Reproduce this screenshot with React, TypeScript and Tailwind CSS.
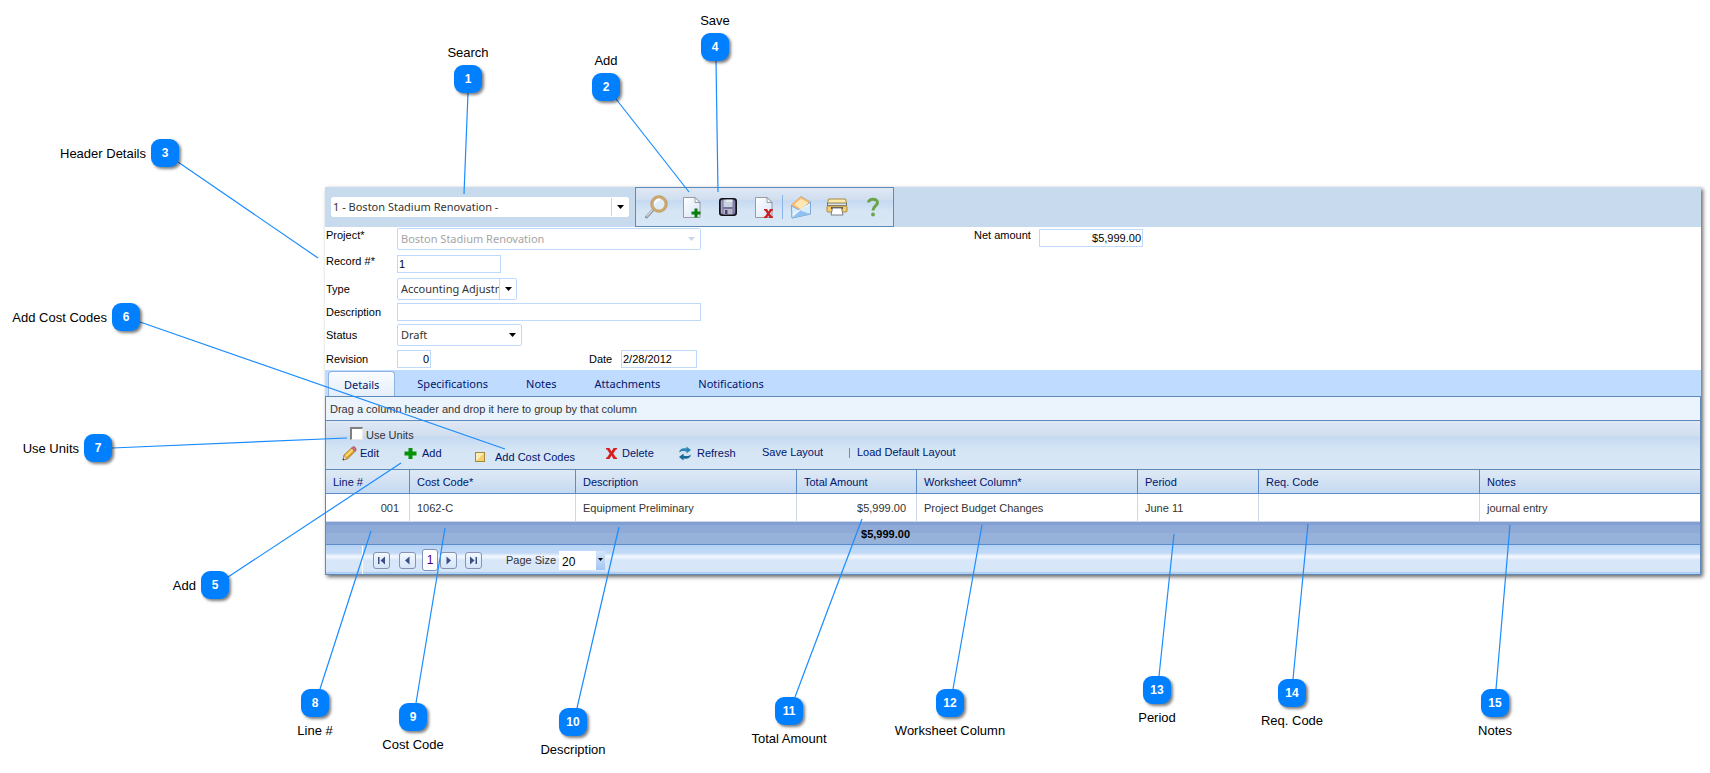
import { ReactNode } from 'react'

type Pin = {
  n: number
  label: string
  side: 'top' | 'left' | 'bottom'
  x: number
  y: number
  from: [number, number]
  to: [number, number]
}

// x / y are the centre of the numbered badge
const pins: Pin[] = [
  { n: 1, label: 'Search', side: 'top', x: 468, y: 79, from: [468, 93], to: [464, 194] },
  { n: 2, label: 'Add', side: 'top', x: 606, y: 87, from: [616, 99], to: [689, 192] },
  { n: 3, label: 'Header Details', side: 'left', x: 165, y: 153, from: [178, 162], to: [318, 258] },
  { n: 4, label: 'Save', side: 'top', x: 715, y: 47, from: [716, 61], to: [718, 192] },
  { n: 5, label: 'Add', side: 'left', x: 215, y: 585, from: [228, 577], to: [401, 463] },
  { n: 6, label: 'Add Cost Codes', side: 'left', x: 126, y: 317, from: [140, 322], to: [505, 449] },
  { n: 7, label: 'Use Units', side: 'left', x: 98, y: 448, from: [112, 448], to: [347, 438] },
  { n: 8, label: 'Line #', side: 'bottom', x: 315, y: 703, from: [320, 689], to: [371, 531] },
  { n: 9, label: 'Cost Code', side: 'bottom', x: 413, y: 717, from: [416, 703], to: [445, 528] },
  { n: 10, label: 'Description', side: 'bottom', x: 573, y: 722, from: [577, 708], to: [619, 527] },
  { n: 11, label: 'Total Amount', side: 'bottom', x: 789, y: 711, from: [795, 697], to: [862, 519] },
  { n: 12, label: 'Worksheet Column', side: 'bottom', x: 950, y: 703, from: [953, 689], to: [982, 525] },
  { n: 13, label: 'Period', side: 'bottom', x: 1157, y: 690, from: [1159, 676], to: [1174, 534] },
  { n: 14, label: 'Req. Code', side: 'bottom', x: 1292, y: 693, from: [1293, 679], to: [1308, 524] },
  { n: 15, label: 'Notes', side: 'bottom', x: 1495, y: 703, from: [1496, 689], to: [1510, 525] },
]

const labelSide = {
  top: 'bottom-[32px] left-1/2 -translate-x-1/2',
  left: 'right-[33px] top-[7px]',
  bottom: 'top-[34px] left-1/2 -translate-x-1/2',
}

const columns = [
  { title: 'Line #', width: 84, value: '001', right: true },
  { title: 'Cost Code*', width: 166, value: '1062-C' },
  { title: 'Description', width: 221, value: 'Equipment Preliminary' },
  { title: 'Total Amount', width: 120, value: '$5,999.00', right: true, total: '$5,999.00' },
  { title: 'Worksheet Column*', width: 221, value: 'Project Budget Changes' },
  { title: 'Period', width: 121, value: 'June 11' },
  { title: 'Req. Code', width: 221, value: '' },
  { title: 'Notes', width: 220, value: 'journal entry' },
]

const barGradient = 'bg-[linear-gradient(#dfe8f5_0%,#d0deef_31%,#c5d9f1_33%,#d5e5f4_60%,#d7e7f5_100%)]'

function Caret({ className = 'text-black' }: { className?: string }) {
  return (
    <svg width="7" height="4" viewBox="0 0 7 4" className={className} aria-hidden="true">
      <path d="M0 0h7L3.5 4z" fill="currentColor" />
    </svg>
  )
}

function Combo({
  id,
  value,
  className,
  selectClass = 'pl-[3px]',
  divider,
  disabled,
  label,
}: {
  id: string
  value: string
  className: string
  selectClass?: string
  divider?: boolean
  disabled?: boolean
  label?: string
}) {
  return (
    <div className={`relative rounded-[2px] border bg-white ${className}`}>
      <select
        id={id}
        aria-label={label}
        disabled={disabled}
        className={`block h-full w-full appearance-none bg-transparent pt-px font-['Noto_Sans',sans-serif] text-[11px] opacity-100 outline-none ${selectClass} ${disabled ? 'text-[#a5a5a5]' : 'text-[#333]'}`}
      >
        <option>{value}</option>
      </select>
      <span
        className={`pointer-events-none absolute inset-y-0 right-0 flex w-[17px] items-center justify-center rounded-[2px] bg-white ${divider ? 'rounded-l-none border-l border-[#bfd9fb]' : ''}`}
      >
        <Caret className={disabled ? 'text-[#c9d6ea]' : 'text-black'} />
      </span>
    </div>
  )
}

function TextBox({ id, value = '', className }: { id: string; value?: string; className: string }) {
  return (
    <input
      id={id}
      type="text"
      defaultValue={value}
      className={`h-[18px] rounded-none border border-[#bfd9fb] bg-white px-px text-[11px] text-black outline-none ${className}`}
    />
  )
}

function Row({ id, label, className, labelClass = '', children }: {
  id: string
  label: string
  className: string
  labelClass?: string
  children: ReactNode
}) {
  return (
    <div className={`flex items-center ${className}`}>
      <label htmlFor={id} className={`w-[71px] shrink-0 leading-4 ${labelClass}`}>
        {label}
      </label>
      {children}
    </div>
  )
}

function SearchIcon() {
  return (
    <svg width="24" height="24" viewBox="0 0 24 24">
      <path d="M2.500 22L9 15" stroke="#8f959c" strokeWidth="3" strokeLinecap="round" />
      <path d="M2.500 21.500L9 14.500" stroke="#d5d9dd" strokeWidth="1.200" />
      <circle cx="15" cy="9" r="7" fill="#dfedfa" stroke="#cba970" strokeWidth="3" />
      <circle cx="15" cy="9" r="8.300" fill="none" stroke="#b58e54" strokeWidth=".5" />
      <path d="M11 8.500a4.500 4.500 0 0 1 5-4" stroke="#fff" strokeWidth="2" fill="none" />
    </svg>
  )
}

function PageIcon({ children }: { children: ReactNode }) {
  return (
    <svg width="20" height="24" viewBox="0 0 20 24">
      <defs>
        <linearGradient id="page" x1="0" y1="0" x2="1" y2="1">
          <stop offset="0" stopColor="#fff" />
          <stop offset="1" stopColor="#d5e4f8" />
        </linearGradient>
      </defs>
      <path d="M1.500 2.500h11.500l5 5v15h-16.500z" fill="url(#page)" stroke="#9a9a9f" />
      <path d="M13 2.500v5h5z" fill="#f4f8fd" stroke="#85858c" strokeWidth=".8" />
      {children}
    </svg>
  )
}

function SaveIcon() {
  return (
    <svg width="18" height="18" viewBox="0 0 18 18">
      <rect x=".8" y=".8" width="16.400" height="16.400" rx="2.500" fill="#77749c" stroke="#101016" strokeWidth="1.600" />
      <path d="M2 2.500h1.500v13h-1.500z" fill="#a3a3c4" />
      <path d="M4.500 1.700h9v7.300h-9z" fill="#c9d3df" />
      <path d="M7 1.700h6.500v2.300h-6.500z" fill="#e4eaf0" />
      <path d="M4.500 11h9v5.300h-9z" fill="#b6b6c8" />
      <path d="M6 12h2.500v4h-2.500z" fill="#4a4870" />
      <path d="M15 4v10" stroke="#918eb4" fill="none" />
    </svg>
  )
}

function MailIcon() {
  return (
    <svg width="22" height="24" viewBox="0 0 22 24">
      <path d="M1.500 10L11 1.500L20.500 7v12l-18.500 4z" fill="#b6d6f5" stroke="#7ea6d3" strokeWidth=".8" />
      <path d="M2 9L10.500 1.500L20 6.500L19.500 9.500L11 15L2 11z" fill="#f9b566" />
      <path d="M4 9.500L11 3.500L18 7.500L17 10.500L10.500 14z" fill="#fde6b6" />
      <path d="M1.500 11L10 15.500L20.500 7v12L2 23z" fill="#d9ecfc" stroke="#6e9fd6" strokeWidth=".8" />
      <path d="M2 23L10 15.500L20.500 19z" fill="#8fc1f0" />
      <path d="M2.500 20L10 15L19.500 9" stroke="#fff" fill="none" />
    </svg>
  )
}

function PrinterIcon() {
  return (
    <svg width="22" height="18" viewBox="0 0 22 18">
      <path d="M2.500 1h17l1 4h-19z" fill="#fbeaa8" stroke="#a58a4c" />
      <rect x="1" y="5" width="20" height="3" fill="#70757d" />
      <path d="M2 5.500h18v1.500h-18z" fill="#dfe4ea" />
      <rect x="1" y="8" width="20" height="6" rx="1" fill="#f4cf6c" stroke="#a98b46" />
      <path d="M5 9h12v2h-12z" fill="#5b5340" />
      <path d="M6.500 10h9l1.500 7h-12z" fill="#fff" stroke="#7b7f88" />
    </svg>
  )
}

function HelpIcon() {
  return (
    <svg width="14" height="20" viewBox="0 0 14 20">
      <path d="M2.500 5.500C2.500 1 11.500 1 11.500 5.500C11.500 9 7 9 7 13.500" fill="none" stroke="#6ba348" strokeWidth="3" />
      <circle cx="7" cy="17.500" r="1.900" fill="#6ba348" />
    </svg>
  )
}

function PencilIcon() {
  return (
    <svg width="15" height="15" viewBox="0 0 15 15">
      <path d="M1 14l1-5L9.500 2l3.500 3.500L5.500 13z" fill="#f2b632" stroke="#9a6a2b" strokeWidth=".7" />
      <path d="M3.500 10.500L11 3.500" stroke="#fbe08a" strokeWidth="1.300" />
      <path d="M5 12.300L12.300 5.200" stroke="#c27f22" strokeWidth="1" />
      <path d="M9.500 2l1.500-1.500q3 .3 3.300 3.500L13 5.500z" fill="#d8697a" stroke="#8d4a57" strokeWidth=".6" />
      <path d="M1 14l1-4.500l3 3.300z" fill="#f3d9b5" stroke="#8a6d4b" strokeWidth=".5" />
      <path d="M.7 14.300l.5-2l1.400 1.400z" fill="#333" />
    </svg>
  )
}

function RefreshIcon() {
  return (
    <svg width="14" height="15" viewBox="0 0 14 15">
      <path d="M1 6.500C1.500 2.500 5 1.500 8.500 2.500L8.500 .5L13 4L8.500 7.500V5.500C6 4.500 3 4.800 1 6.500z" fill="#2f86b5" />
      <path d="M13 8.500C12.500 12.500 9 13.500 5.500 12.500V14.500L1 11L5.500 7.500V9.500C8 10.500 11 10.200 13 8.500z" fill="#1c6a98" />
    </svg>
  )
}

function PagerButton({ label, path }: { label: string; path: string }) {
  return (
    <button
      type="button"
      aria-label={label}
      className="flex h-[17px] w-[17px] items-center justify-center rounded-[3px] border border-[#8593b4] bg-[linear-gradient(#f3f8fe,#d5e4f8)]"
    >
      <svg width="9" height="9" viewBox="0 0 9 9">
        <path d={path} fill="#3a4f86" />
      </svg>
    </button>
  )
}

export default function App() {
  const tools = [
    { label: 'Search', icon: <SearchIcon /> },
    {
      label: 'Add',
      icon: (
        <PageIcon>
          <path d="M9.500 18h9M14 13.500v9" stroke="#0a7d0a" strokeWidth="3" />
        </PageIcon>
      ),
    },
    { label: 'Save', icon: <SaveIcon /> },
    {
      label: 'Delete',
      icon: (
        <PageIcon>
          <path d="M10 14h3l1.500 2.500L16 14h3v1.500h-1L15.800 18.500L18 21.500h1V23h-3.500L14.200 20.500L13 23h-3v-1.500h1L13 18.500L11 15.500h-1z" fill="#c81e1e" />
        </PageIcon>
      ),
    },
    { label: 'Email', icon: <MailIcon /> },
    { label: 'Print', icon: <PrinterIcon /> },
    { label: 'Help', icon: <HelpIcon /> },
  ]

  return (
    <main className="relative min-h-screen overflow-hidden bg-white pt-[187px] pr-[9px] pb-[197px] pl-[325px] font-['Liberation_Sans',Arial,sans-serif] text-[11px] text-black">
      <div className="bg-white shadow-[2px_2px_4px_rgba(0,0,0,0.6)]">
        {/* record picker and main tools */}
        <div className="flex h-10 items-stretch bg-[#c8daee] pl-[6px]">
          <Combo
            id="record-search"
            label="Search"
            value="1 - Boston Stadium Renovation -"
            className="mt-[10px] mr-[6px] h-5 w-[298px] border-white"
            selectClass="pl-px"
            divider
          />
          <div className={`flex items-center border border-[#5d8ab8] px-[2px] ${barGradient}`}>
            {tools.map((t, i) => (
              <div key={t.label} className="flex items-center">
                {i === 4 && <span className="h-6 w-px bg-[#8db4e8]" />}
                <button type="button" aria-label={t.label} className="flex h-9 w-9 items-center justify-center">
                  {t.icon}
                </button>
              </div>
            ))}
          </div>
        </div>

        {/* header details */}
        <div className="flex h-[143px] pl-px">
          <div className="w-[648px] shrink-0">
            <Row id="project" label="Project*" className="h-6" labelClass="self-start">
              <Combo id="project" value="Boston Stadium Renovation" className="h-[22px] w-[304px] border-[#bfd9fb]" disabled />
            </Row>
            <Row id="record" label="Record #*" className="h-[26px]" labelClass="pb-1.5">
              <TextBox id="record" value="1" className="w-[104px]" />
            </Row>
            <Row id="type" label="Type" className="h-6">
              <Combo id="type" value="Accounting Adjustment" className="h-[22px] w-[120px] border-[#bfd9fb]" divider />
            </Row>
            <Row id="description" label="Description" className="h-[22px]">
              <TextBox id="description" className="w-[304px]" />
            </Row>
            <Row id="status" label="Status" className="h-6">
              <Combo id="status" value="Draft" className="h-[22px] w-[125px] border-[#bfd9fb]" />
            </Row>
            <Row id="revision" label="Revision" className="h-6">
              <TextBox id="revision" value="0" className="w-[34px] text-right" />
              <label htmlFor="date" className="ml-[158px] w-8 leading-4">
                Date
              </label>
              <TextBox id="date" value="2/28/2012" className="w-[76px]" />
            </Row>
          </div>
          <div className="flex h-[22px] items-center">
            <label htmlFor="net" className="w-[65px] self-start leading-4">
              Net amount
            </label>
            <TextBox id="net" value="$5,999.00" className="w-[104px] text-right" />
          </div>
        </div>

        {/* tabs */}
        <div className="flex h-[26px] items-stretch gap-[6px] bg-[#bfdbff] pl-[3px] font-['Noto_Sans',sans-serif] text-[11px] text-[#00156e]">
          {['Details', 'Specifications', 'Notes', 'Attachments', 'Notifications'].map((tab, i) => (
            <button
              key={tab}
              type="button"
              className={`mt-px border px-[15px] pt-0.5 ${i === 0 ? 'rounded-t border-b-0 border-[#8db2e3] bg-[linear-gradient(#fafcff,#e4eefb)]' : 'border-transparent'}`}
            >
              {tab}
            </button>
          ))}
        </div>

        {/* grid */}
        <div className="border border-[#5d8ab8] text-[#00156e]">
          <div className="flex h-6 items-center border-b border-[#5d8ab8] bg-[#ebf3fd] pt-0.5 pl-1 text-[#333]">
            Drag a column header and drop it here to group by that column
          </div>

          <div className={`h-[49px] border-b border-[#5d8ab8] pt-[6px] ${barGradient}`}>
            <label className="flex h-4 items-center gap-[3px] pl-6 text-[#333]">
              <input
                type="checkbox"
                className="mb-1 h-[13px] w-[13px] appearance-none border-t-2 border-r border-b border-l-2 border-t-[#808080] border-r-[#e8e8e8] border-b-[#e8e8e8] border-l-[#808080] bg-white"
              />
              Use Units
            </label>
            <div className="flex h-5 items-center pl-4">
              <button type="button" className="flex w-[62px] items-center gap-[3px]">
                <PencilIcon />
                Edit
              </button>
              <button type="button" className="flex w-[71px] items-center gap-[5px]">
                <svg width="13" height="13" viewBox="0 0 13 13">
                  <path d="M4.500 1h4v3.500h4v4h-4v3.500h-4v-3.500h-4v-4h4z" fill="#089408" />
                </svg>
                Add
              </button>
              <button type="button" className="flex w-[131px] items-center gap-[10px] pt-2">
                <svg width="10" height="10" viewBox="0 0 10 10">
                  <rect x=".5" y=".5" width="9" height="9" fill="#f4d06e" stroke="#a9883c" />
                  <path d="M1 1h8L1 9z" fill="#fdeeb5" />
                </svg>
                Add Cost Codes
              </button>
              <button type="button" className="flex w-[72px] items-center gap-[5px]">
                <svg width="11" height="11" viewBox="0 0 11 11">
                  <path d="M0 0h3.500L5.500 3.500L7.500 0H11V1.500h-1L7.300 5.500L10 9.500h1V11H7.500L5.500 7.500L3.500 11H0V9.500h1L3.700 5.500L1 1.500H0z" fill="#d81e1e" />
                </svg>
                Delete
              </button>
              <button type="button" className="flex w-[84px] items-center gap-[5px]">
                <RefreshIcon />
                Refresh
              </button>
              <button type="button" className="w-[87px] pb-0.5 text-left">
                Save Layout
              </button>
              <span className="mr-[7px] h-[10px] w-px bg-[#6f8fb8]" />
              <button type="button" className="pb-0.5">
                Load Default Layout
              </button>
            </div>
          </div>

          <table className="w-full table-fixed border-separate border-spacing-0">
            <colgroup>
              {columns.map((c) => (
                <col key={c.title} style={{ width: c.width }} />
              ))}
            </colgroup>
            <thead>
              <tr className="h-6 bg-[linear-gradient(#dfe9f5,#c4d9f1)]">
                {columns.map((c) => (
                  <th
                    key={c.title}
                    className="border-r border-b border-[#5d8cc9] p-0 pt-0.5 pl-[7px] text-left font-normal whitespace-nowrap last:border-r-0"
                  >
                    {c.title}
                  </th>
                ))}
              </tr>
            </thead>
            <tbody>
              <tr className="h-7 bg-white text-[#333]">
                {columns.map((c) => (
                  <td
                    key={c.title}
                    className={`border-r border-b border-[#d0d7e5] p-0 pt-0.5 pl-[7px] whitespace-nowrap last:border-r-0 ${c.right ? 'pr-[10px] text-right' : ''}`}
                  >
                    {c.value}
                  </td>
                ))}
              </tr>
            </tbody>
            <tfoot>
              <tr className="h-[23px] bg-[linear-gradient(#829fd3_0%,#829fd3_13%,#8faad6_15%,#8faad6_48%,#96b2da_50%,#96b2da_100%)] font-bold text-black">
                {columns.map((c) => (
                  <td key={c.title} className="border-b border-[#5d8cc9] p-0 pt-0.5 pr-[7px] text-right">
                    {c.total}
                  </td>
                ))}
              </tr>
            </tfoot>
          </table>

          <div className="flex h-[29px] items-center bg-[linear-gradient(#b5d2f6_0%,#c3daf6_28%,#f0f6fe_38%,#f0f6fe_42%,#d7e6f9_52%,#d7e6f9_91%,#b2d0f3_93%)] pt-px">
            <span className="mr-[10px] ml-9 h-full w-px bg-white" />
            <PagerButton label="First page" path="M1 1h1.500v7h-1.500zM8 0.500v8l-4.500-4z" />
            <span className="w-[9px]" />
            <PagerButton label="Previous page" path="M6.500 0.500v8l-4.500-4z" />
            <span className="mr-0.5 ml-1.5 flex h-[22px] w-4 items-center justify-center rounded-[3px] border border-[#7f92ba] bg-white text-[12px] text-[#4b0082]">
              1
            </span>
            <PagerButton label="Next page" path="M2.500 0.500v8l4.500-4z" />
            <span className="w-2" />
            <PagerButton label="Last page" path="M1 0.500v8l4.500-4zM6.500 1h1.500v7h-1.500z" />
            <label htmlFor="page-size" className="ml-6 w-[53px] text-[#333]">
              Page Size
            </label>
            <div className="relative h-[19px] w-[46px] bg-white">
              <select id="page-size" className="h-full w-full appearance-none pt-0.5 pl-[3px] text-[12px] text-black outline-none">
                <option>20</option>
              </select>
              <span className="pointer-events-none absolute inset-y-0 right-0 flex w-[9px] justify-center bg-[linear-gradient(#d3e5fb,#a5c6f0)] pt-[7px]">
                <svg width="5" height="3" viewBox="0 0 5 3">
                  <path d="M0 0h5L2.500 3z" />
                </svg>
              </span>
            </div>
          </div>
        </div>
      </div>

      {/* callouts drawn over the form */}
      <svg className="pointer-events-none absolute top-0 left-0 h-[773px] w-[1710px]" aria-hidden="true">
        {pins.map((p) => (
          <line key={p.n} x1={p.from[0]} y1={p.from[1]} x2={p.to[0]} y2={p.to[1]} stroke="#1a8cff" strokeWidth="1.200" />
        ))}
      </svg>
      {pins.map((p) => (
        <div key={p.n} className="absolute h-7 w-7" style={{ left: p.x - 14, top: p.y - 14 }}>
          <div className="flex h-7 w-7 items-center justify-center rounded-[9px] bg-[#0080ff] text-[12px] font-bold text-white shadow-[2px_2px_3px_rgba(0,0,0,0.5)]">
            {p.n}
          </div>
          <div className={`absolute text-[13px] leading-4 whitespace-nowrap ${labelSide[p.side]}`}>{p.label}</div>
        </div>
      ))}
    </main>
  )
}
